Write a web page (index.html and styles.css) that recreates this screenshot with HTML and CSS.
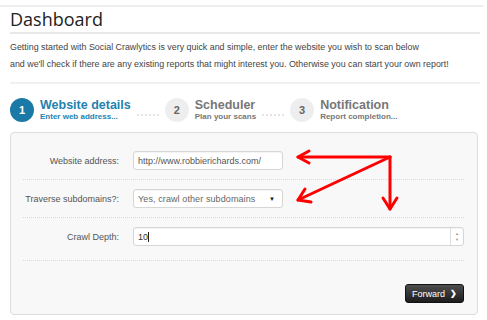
FILE: index.html
```html
<!DOCTYPE html>
<html lang="en">
<head>
  <meta charset="UTF-8" />
  <title>Dashboard - Social Crawlytics</title>
  <link rel="stylesheet" href="styles.css">
</head>
<body>

  <div class="topbar"></div>

  <div class="container">
    <h1>Dashboard</h1>
    <p class="intro">
      Getting started with Social Crawlytics is very quick and simple, enter the website you wish to scan below<br>
      and we'll check if there are any existing reports that might interest you. Otherwise you can start your own report!
    </p>

    <div class="steps">
      <div class="step active">
        <div class="num">1</div>
        <div class="step-text">
          <div class="step-title">Website details</div>
          <div class="step-sub">Enter web address...</div>
        </div>
      </div>
      <div class="dots"></div>
      <div class="step">
        <div class="num">2</div>
        <div class="step-text">
          <div class="step-title">Scheduler</div>
          <div class="step-sub">Plan your scans</div>
        </div>
      </div>
      <div class="dots"></div>
      <div class="step">
        <div class="num">3</div>
        <div class="step-text">
          <div class="step-title">Notification</div>
          <div class="step-sub">Report completion...</div>
        </div>
      </div>
    </div>

    <div class="panel">
      <div class="form-row">
        <label>Website address:</label>
        <div class="field">http://www.robbierichards.com/</div>
      </div>
      <div class="form-row">
        <label>Traverse subdomains?:</label>
        <div class="field select">
          <span>Yes, crawl other subdomains</span>
          <span class="caret">&#9660;</span>
        </div>
      </div>
      <div class="form-row last">
        <label>Crawl Depth:</label>
        <div class="field wide">
          <span>10</span><span class="cursor"></span>
          <div class="spinner">
            <span>&#9650;</span>
            <span>&#9660;</span>
          </div>
        </div>
      </div>
      <div class="actions">
        <button class="forward-btn">Forward <span class="chev">&#10095;</span></button>
      </div>
    </div>
  </div>

  <!-- annotation arrows -->
  <svg class="arrows" width="487" height="320" viewBox="0 0 487 320">
    <g stroke="#f00" stroke-width="3" fill="none" stroke-linecap="round" stroke-linejoin="round">
      <path d="M390 157 L298 157" />
      <path d="M309 151 L298 157 L309 163" />
      <path d="M390 157 L298 200" />
      <path d="M305 189 L298 200 L311 202" />
      <path d="M390 157 L390 209" />
      <path d="M383 198 L390 209 L397 198" />
    </g>
  </svg>

</body>
</html>
```

FILE: styles.css
```css
body {
  margin: 0;
  font-family: "Liberation Sans", Arial, sans-serif;
  background: #fff;
  color: #444;
  position: relative;
  width: 487px;
  height: 320px;
  overflow: hidden;
}

.topbar {
  margin: 5px 4px 0 0;
  border-bottom: 2px solid #eee;
}

.container {
  margin: 0 7px 0 10px;
}

h1 {
  font-family: "Open Sans", "Liberation Sans", sans-serif;
  font-weight: 400;
  font-size: 18px;
  line-height: 24px;
  color: #222;
  margin: 0;
  padding-bottom: 1px;
  border-bottom: 2px solid #e8e8e8;
}

.intro {
  font-size: 8.9px;
  line-height: 17px;
  color: #444;
  margin: 5px 0 0;
  padding-bottom: 9px;
  border-bottom: 2px solid #f0f0f0;
}

.steps {
  display: flex;
  align-items: center;
  margin-top: 14px;
  height: 24px;
}

.step {
  display: flex;
  align-items: center;
  gap: 6px;
}

.num {
  width: 24px;
  height: 24px;
  border-radius: 50%;
  background: #eee;
  color: #666;
  font-size: 11px;
  font-weight: 700;
  display: flex;
  align-items: center;
  justify-content: center;
}

.step-title {
  font-size: 12.5px;
  font-weight: 700;
  line-height: 14px;
  color: #777;
}

.step-sub {
  font-size: 8px;
  font-weight: 700;
  line-height: 10px;
  color: #777;
}

.step.active .num {
  background: #1a79a7;
  color: #fff;
}

.step.active .step-title,
.step.active .step-sub {
  color: #2482b0;
}

.dots {
  width: 22px;
  border-top: 2px dotted #e4e4e4;
  margin: 0 6px;
  align-self: flex-end;
  margin-bottom: 6px;
}

.panel {
  margin-top: 10px;
  width: 468px;
  background: #f8f8f8;
  border: 1px solid #ddd;
  border-radius: 4px;
  padding: 9px 13px 0 12px;
  box-sizing: border-box;
  height: 183px;
}

.form-row {
  display: flex;
  align-items: center;
  padding: 9px 0;
  border-bottom: 1px dotted #d8d8d8;
}

.form-row.last {
  padding-bottom: 14px;
}

.form-row label {
  width: 96px;
  text-align: right;
  font-size: 9px;
  color: #555;
  margin-right: 14px;
}

.field {
  width: 150px;
  height: 19px;
  box-sizing: border-box;
  background: #fff;
  border: 1px solid #d6d6d6;
  border-radius: 3px;
  box-shadow: inset 0 1px 1px rgba(0, 0, 0, 0.05);
  font-size: 9px;
  color: #555;
  padding: 0 4px;
  display: flex;
  align-items: center;
  position: relative;
}

.field.select {
  justify-content: space-between;
  font-size: 9px;
  letter-spacing: 0.1px;
  color: #666;
}

.caret {
  font-size: 6px;
  color: #111;
  margin-right: 3px;
}

.field.wide {
  flex: 1;
  color: #333;
}

.cursor {
  display: inline-block;
  width: 1px;
  height: 10px;
  background: #222;
}

.spinner {
  position: absolute;
  right: 0;
  top: 0;
  bottom: 0;
  width: 12px;
  border-left: 1px solid #ddd;
  display: flex;
  flex-direction: column;
  justify-content: center;
  align-items: center;
  font-size: 4px;
  line-height: 6px;
  color: #999;
}

.actions {
  display: flex;
  justify-content: flex-end;
  padding-top: 23px;
}

.forward-btn {
  width: 59px;
  height: 19px;
  border: 1px solid #111;
  border-radius: 3px;
  background: linear-gradient(#4d4d4d, #1c1c1c);
  color: #fff;
  font-family: "Liberation Sans", Arial, sans-serif;
  font-size: 9px;
  padding: 0;
  display: flex;
  align-items: center;
  justify-content: center;
  gap: 5px;
}

.chev {
  font-size: 8px;
  font-weight: 700;
}

.arrows {
  position: absolute;
  left: 0;
  top: 0;
  pointer-events: none;
}
```
